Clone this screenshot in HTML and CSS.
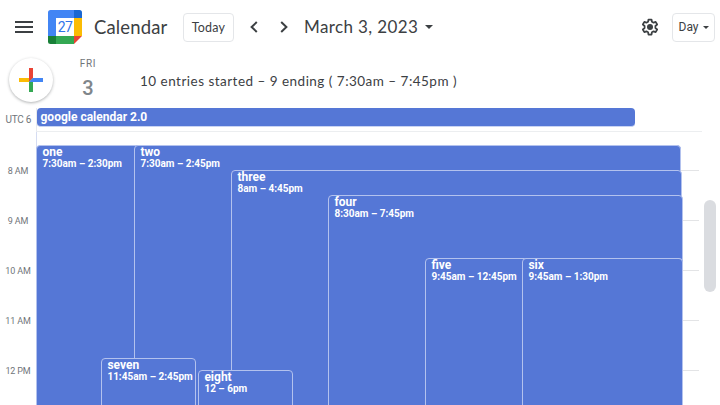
FILE: index.html
```html
<!DOCTYPE html>
<html lang="en">
<head>
<meta charset="utf-8">
<title>Calendar</title>
<link rel="stylesheet" href="styles.css">
</head>
<body>
<header class="toolbar">
  <svg class="menu" viewBox="0 0 18 12"><path d="M0 0h18v2H0zM0 5h18v2H0zM0 10h18v2H0z"/></svg>
  <div class="logo">
    <svg viewBox="0 0 34 34">
      <path fill="#4285f4" d="M2.5 0H26v8H8v18H0V2.5Q0 0 2.5 0z"/>
      <path fill="#1967d2" d="M26 0h5.5Q34 0 34 2.5V8h-8z"/>
      <path fill="#fbbc04" d="M26 8h8v18h-8z"/>
      <path fill="#34a853" d="M8 26h18v8H8z"/>
      <path fill="#188038" d="M0 26h8v8H2.5Q0 34 0 31.5z"/>
      <path fill="#ea4335" d="M26 26h8l-8 8z"/>
      <path fill="#fff" d="M8 8h18v18H8z"/>
    </svg>
    <span class="logo-day">27</span>
  </div>
  <span class="brand">Calendar</span>
  <button class="btn today">Today</button>
  <svg class="chev prev" viewBox="0 0 8 12"><path d="M6.8 1 1.6 6l5.2 5"/></svg>
  <svg class="chev next" viewBox="0 0 8 12"><path d="M1.2 1l5.2 5-5.2 5"/></svg>
  <span class="date">March 3, 2023</span>
  <svg class="caret" viewBox="0 0 8 4"><path d="M0 0h8L4 4z"/></svg>
  <svg class="gear" viewBox="0 0 24 24"><path fill="none" stroke="#3c4043" stroke-width="2.1" stroke-linejoin="round" d="M10.2 3h3.6l.5 2.7 2 1.1 2.5-.9 1.8 3.1-2.1 1.8v2.4l2.1 1.8-1.8 3.1-2.5-.9-2 1.1-.5 2.7h-3.6l-.5-2.7-2-1.1-2.5.9L3.4 15l2.1-1.8v-2.4L3.4 9l1.8-3.1 2.5.9 2-1.1z"/><circle cx="12" cy="12" r="3.6" fill="#3c4043"/></svg>
  <button class="btn view">Day<svg class="view-caret" viewBox="0 0 6 3"><path d="M0 0h6L3 3z"/></svg></button>
</header>

<section class="day-head">
  <button class="create"><svg viewBox="0 0 24 24">
    <path fill="#ea4335" d="M10 0h4v10l-4 4z"/>
    <path fill="#fbbc04" d="M0 10h10v4H0z"/>
    <path fill="#34a853" d="M10 14l4-4v14h-4z"/>
    <path fill="#4285f4" d="M14 10h10v4H10z"/>
  </svg></button>
  <div class="day"><span class="dow">FRI</span><span class="num">3</span></div>
  <p class="summary">10 entries started – 9 ending ( 7:30am – 7:45pm )</p>
</section>

<section class="allday">
  <span class="zone">UTC 6</span>
  <div class="allday-lane"><div class="allday-event">google calendar 2.0</div></div>
</section>

<main class="schedule">
  <div class="hours"><span>8 AM</span><span>9 AM</span><span>10 AM</span><span>11 AM</span><span>12 PM</span></div>
  <div class="grid">
    <i class="line h8"></i><i class="line h9"></i><i class="line h10"></i><i class="line h11"></i><i class="line h12"></i>
    <article class="event one"><b>one</b><span>7:30am – 2:30pm</span></article>
    <article class="event two"><b>two</b><span>7:30am – 2:45pm</span></article>
    <article class="event three"><b>three</b><span>8am – 4:45pm</span></article>
    <article class="event four"><b>four</b><span>8:30am – 7:45pm</span></article>
    <article class="event five"><b>five</b><span>9:45am – 12:45pm</span></article>
    <article class="event six"><b>six</b><span>9:45am – 1:30pm</span></article>
    <article class="event seven"><b>seven</b><span>11:45am – 2:45pm</span></article>
    <article class="event eight"><b>eight</b><span>12 – 6pm</span></article>
  </div>
  <div class="scroll"><div class="thumb"></div></div>
</main>
</body>
</html>
```

FILE: styles.css
```css
* { box-sizing: border-box; }
body {
  margin: 0;
  width: 720px;
  height: 405px;
  overflow: hidden;
  background: #fff;
  color: #3c4043;
  font-family: Roboto, "Liberation Sans", sans-serif;
}
svg { display: block; flex: none; fill: #3c4043; }
button { font: inherit; color: inherit; padding: 0; }

.toolbar { display: flex; align-items: center; height: 54px; padding: 0 5px 0 15px; white-space: nowrap; }
.menu { width: 18px; height: 12px; }
.logo { display: grid; place-items: center; width: 34px; height: 34px; margin-left: 15px; }
.logo > * { grid-area: 1 / 1; }
.logo svg { width: 34px; height: 34px; }
.logo-day { color: #2f75e8; font-size: 14px; line-height: 16px; letter-spacing: -.6px; }
.brand { width: 74px; margin-left: 12px; font: 18.5px/24px Lato, sans-serif; letter-spacing: .15px; }
.btn { height: 29px; border: 1px solid #e4e6e9; border-radius: 4px; background: #fff; }
.today { width: 51px; margin-left: 15px; font-family: Lato, sans-serif; font-size: 12.5px; letter-spacing: .2px; }
.chev { width: 8px; height: 12px; fill: none; stroke: #3c4043; stroke-width: 2; }
.prev { margin-left: 16px; }
.next { margin-left: 22px; }
.date { width: 115px; margin-left: 16px; font: 17px/24px Lato, sans-serif; letter-spacing: .38px; }
.caret { width: 8px; height: 4px; margin-left: 6px; }
.gear { width: 20px; height: 20px; margin-left: auto; }
.view { display: flex; align-items: center; justify-content: center; width: 43px; margin-left: 12px; font-size: 12px; }
.view-caret { width: 6px; height: 3px; margin-left: 4px; }

.day-head { display: flex; height: 54px; padding-left: 9px; }
.create {
  display: grid;
  place-items: center;
  width: 44px;
  height: 44px;
  margin-top: 4px;
  border: 0;
  border-radius: 50%;
  background: #fff;
  box-shadow: 0 1px 3px rgba(60, 64, 67, .4);
}
.create svg { width: 24px; height: 24px; }
.day { display: flex; flex-direction: column; align-items: center; width: 30px; margin-left: 20px; color: #70757a; }
.dow { margin-top: 4px; font-size: 10px; line-height: 12px; letter-spacing: .7px; }
.num { margin-top: 6px; font-size: 20px; line-height: 24px; font-weight: 500; color: #80868b; }
.summary { margin: 18px 0 0 37px; font: 13.5px/18px Lato, sans-serif; letter-spacing: .48px; white-space: pre; }

.allday { display: flex; height: 24px; }
.zone { width: 36px; padding: 6px 5px 0 0; font-size: 10px; line-height: 12px; text-align: right; color: #70757a; letter-spacing: -.3px; white-space: nowrap; }
.allday-lane { width: 666px; border-left: 1px solid #e8eaed; border-bottom: 1px solid #eceef0; }
.allday-event {
  width: 598px;
  height: 19px;
  padding-left: 4px;
  margin-left: -.5px;
  border-radius: 4px;
  background: #5577d6;
  border-bottom: 1px solid #c9d4f3;
  color: #fff;
  font-size: 12px;
  line-height: 18px;
  font-weight: 700;
}

.schedule { display: flex; height: 273px; overflow: hidden; }
.hours { display: flex; flex-direction: column; width: 36px; padding-top: 14px; }
.hours span { height: 50px; flex: none; text-align: center; font-size: 9px; line-height: 50px; letter-spacing: -.15px; color: #70757a; white-space: nowrap; }
.grid {
  display: grid;
  flex: none;
  width: 664px;
  height: 288px;
  padding-top: 13px;
  border-left: 1px solid #d5dcf2;
  grid-template-columns: 64px 33px 62px 2px 33px 62px 35px 97px 97px 158px 1px 1px 17px;
  grid-template-rows: repeat(22, 12.5px);
}
.line { grid-column: 1 / -1; height: 1px; background: #e3e4e6; }
.h8 { grid-row: 3; }
.h9 { grid-row: 7; }
.h10 { grid-row: 11; }
.h11 { grid-row: 15; }
.h12 { grid-row: 19; }
.event {
  display: flex;
  flex-direction: column;
  min-width: 0;
  padding-left: 5.4px;
  border: 1px solid #b3c2ee;
  border-radius: 4px 4px 0 0;
  background: #5577d6;
  color: #fff;
  white-space: nowrap;
}
.event b { font-size: 12px; line-height: 12px; font-weight: 700; }
.event span { font-size: 10px; line-height: 12px; font-weight: 700; }
.one { grid-area: 1 / 1 / -1 / 11; margin-left: -1px; }
.two { grid-area: 1 / 3 / -1 / 11; }
.three { grid-area: 3 / 6 / -1 / 12; }
.four { grid-area: 5 / 8 / -1 / 13; }
.five { grid-area: 10 / 9 / -1 / 13; }
.six { grid-area: 10 / 10 / -1 / 13; }
.one, .two, .three, .four, .five, .six { margin-right: -1px; }
.seven { grid-area: 18 / 2 / -1 / 4; }
.eight { grid-area: 19 / 5 / -1 / 7; }

.scroll { width: 20px; flex: none; padding: 68px 0 0 4px; }
.thumb { width: 12px; height: 92px; border-radius: 6px; background: #dadce0; }
```
